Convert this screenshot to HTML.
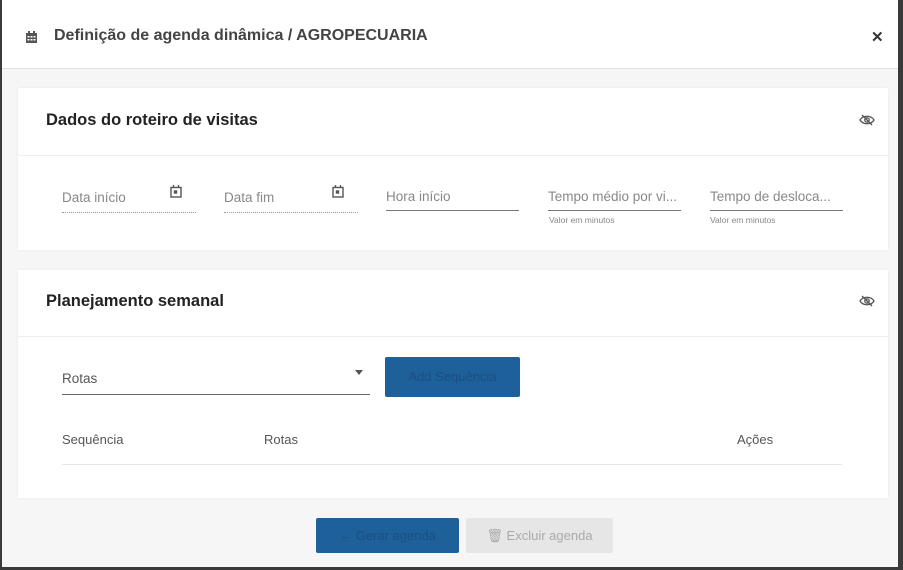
<!DOCTYPE html><html><head><style>
body{margin:0;width:903px;height:570px;background:#3a3a3a;font-family:"Liberation Sans",sans-serif;position:relative;overflow:hidden}
.modal{position:absolute;left:2px;top:0;width:896px;height:567px;background:#f6f6f6}
.hdr{position:absolute;left:0;top:0;width:896px;height:68px;background:#fff;border-bottom:1px solid #e2e2e2}
.a{position:absolute;white-space:nowrap}
.card{position:absolute;left:16px;width:870px;background:#fff;box-shadow:0 0 3px rgba(0,0,0,.06)}
.div{position:absolute;left:0;width:870px;height:1px;background:#eee}
.lbl{font-size:13.5px;color:#888}
.dot{position:absolute;height:0;border-bottom:1px dotted #999}
.ln{position:absolute;height:1px;background:#777}
.sm{font-size:8.5px;color:#888}
</style></head><body><div class="modal">
<div class="hdr">
<svg class="a" style="left:24px;top:31px" width="11" height="12" viewBox="0 0 11 12"><rect x="0" y="2" width="11" height="10" fill="#555"/><rect x="2" y="0" width="2" height="3" fill="#555"/><rect x="7" y="0" width="2" height="3" fill="#555"/><g fill="#fff"><rect x="1.5" y="5" width="2" height="1.5"/><rect x="4.5" y="5" width="2" height="1.5"/><rect x="7.5" y="5" width="2" height="1.5"/><rect x="1.5" y="8" width="2" height="1.5"/><rect x="4.5" y="8" width="2" height="1.5"/><rect x="7.5" y="8" width="2" height="1.5"/></g></svg>
<div class="a" style="left:52px;top:27px;font-size:16px;font-weight:bold;color:#444">Definição de agenda dinâmica / AGROPECUARIA</div>
<div class="a" style="left:869px;top:28px;font-size:15px;font-weight:bold;color:#333">✕</div>
</div>
<div class="card" style="top:88px;height:162px">
<div class="a" style="left:28px;top:23px;font-size:16.5px;font-weight:bold;color:#222">Dados do roteiro de visitas</div>
<svg class="a" style="left:841px;top:26px" width="16" height="12" viewBox="0 0 16 12" fill="none" stroke="#555" stroke-width="1.3"><path d="M1 6C4 1 12 1 15 6C12 11 4 11 1 6Z"/><circle cx="8" cy="6" r="2.2"/><path d="M3 1L13 11"/></svg>
<div class="div" style="top:67px"></div>
<div class="a lbl" style="left:44px;top:102px">Data início</div>
<div class="a lbl" style="left:206px;top:102px">Data fim</div>
<div class="a lbl" style="left:368px;top:101px">Hora início</div>
<div class="a lbl" style="left:530px;top:101px">Tempo médio por vi...</div>
<div class="a lbl" style="left:692px;top:101px">Tempo de desloca...</div>
<svg class="a" style="left:152px;top:97px" width="12" height="13" viewBox="0 0 12 13" fill="none" stroke="#555" stroke-width="1.4"><rect x="1" y="2.5" width="10" height="9.5"/><path d="M3.5 0V3M8.5 0V3"/><rect x="4.5" y="6" width="2" height="2" fill="#555"/></svg>
<svg class="a" style="left:314px;top:97px" width="12" height="13" viewBox="0 0 12 13" fill="none" stroke="#555" stroke-width="1.4"><rect x="1" y="2.5" width="10" height="9.5"/><path d="M3.5 0V3M8.5 0V3"/><rect x="4.5" y="6" width="2" height="2" fill="#555"/></svg>
<div class="dot" style="left:44px;top:124px;width:134px"></div>
<div class="dot" style="left:206px;top:124px;width:134px"></div>
<div class="ln" style="left:368px;top:122px;width:133px"></div>
<div class="ln" style="left:530px;top:122px;width:133px"></div>
<div class="ln" style="left:692px;top:122px;width:133px"></div>
<div class="a sm" style="left:531px;top:127px">Valor em minutos</div>
<div class="a sm" style="left:692px;top:127px">Valor em minutos</div>
</div>
<div class="card" style="top:270px;height:228px">
<div class="a" style="left:28px;top:22px;font-size:16.5px;font-weight:bold;color:#222">Planejamento semanal</div>
<svg class="a" style="left:841px;top:25px" width="16" height="12" viewBox="0 0 16 12" fill="none" stroke="#555" stroke-width="1.3"><path d="M1 6C4 1 12 1 15 6C12 11 4 11 1 6Z"/><circle cx="8" cy="6" r="2.2"/><path d="M3 1L13 11"/></svg>
<div class="div" style="top:66px"></div>
<div class="a" style="left:44px;top:101px;font-size:13.5px;color:#555">Rotas</div>
<div class="a" style="left:337px;top:100px;width:0;height:0;border-left:4px solid transparent;border-right:4px solid transparent;border-top:5px solid #555"></div>
<div class="ln" style="left:44px;top:124px;width:308px;background:#666"></div>
<div class="a" style="left:367px;top:87px;width:135px;height:40px;background:#1e6099;border-radius:2px;color:#1a4f85;font-size:13px;line-height:40px;text-align:center">Add Sequência</div>
<div class="a" style="left:44px;top:162px;font-size:13px;color:#555">Sequência</div>
<div class="a" style="left:246px;top:162px;font-size:13px;color:#555">Rotas</div>
<div class="a" style="left:719px;top:162px;font-size:13px;color:#555">Ações</div>
<div class="a" style="left:44px;top:194px;width:780px;height:1px;background:#e6e6e6"></div>
</div>
<div class="a" style="left:314px;top:518px;width:143px;height:35px;background:#1e6099;border-radius:2px;color:#1a4f85;font-size:13px;line-height:35px;text-align:center">← Gerar agenda</div>
<div class="a" style="left:464px;top:518px;width:147px;height:35px;background:#e6e6e6;border-radius:2px;color:#aaa;font-size:13px;line-height:35px;text-align:center">🗑 Excluir agenda</div>
</div></body></html>
